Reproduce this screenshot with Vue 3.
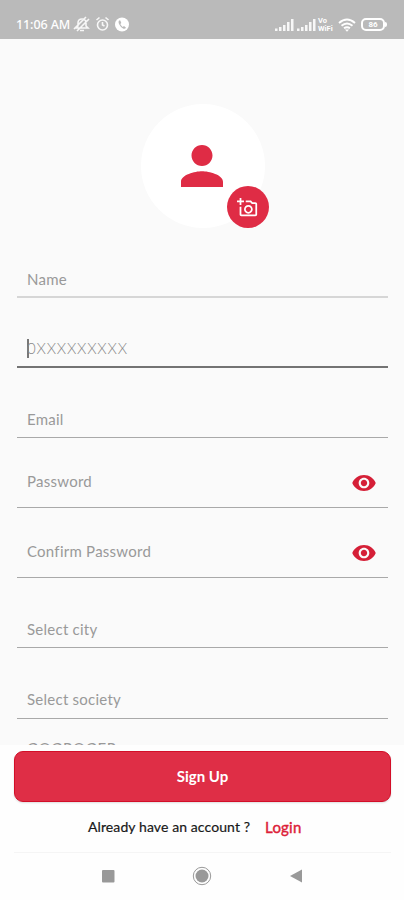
<template>
  <div class="screen">
    <header class="status-bar">
      <span class="time">11:06 AM</span>
      <svg class="status-left" viewBox="0 0 58 18" width="58" height="18">
        <g fill="none" stroke="#f7f7f7" stroke-width="1.6">
          <path d="M3 13l2-2V8q0-4 4-4t4 4v3l2 2zM7 15.500h4M1 14L13 2M4 16L16 4" />
          <circle cx="29.500" cy="10" r="5" />
          <path d="M29.500 7v3l2 1M23.500 5l3-2.500M35.500 5l-3-2.500" />
        </g>
        <circle cx="49" cy="9.500" r="7" fill="#fff" />
        <path d="M46 5.500q-1 1 0 3.500q1.500 3 4 4.500q2 .8 3-.8l-2-1.700-1.300.9q-1.700-1-2.400-2.800l1-1.200-1-2.400z" fill="#bababa" />
      </svg>
      <div class="status-right">
        <svg v-for="n in 2" :key="n" class="signal" viewBox="0 0 20 12" width="20" height="12">
          <path d="M1 9.500h2.500V12H1zM5 8h2.500v4H5zM9 6h2.500v6H9zM13 3h2.500v9H13zM17 0h2.500v12H17z" fill="#f7f7f7" />
        </svg>
        <div class="vowifi"><span>Vo</span><span>WiFi</span></div>
        <svg class="wifi" viewBox="0 0 18 14" width="18" height="14">
          <path d="M1 5q8-7 16 0M3.500 7.800q5.500-4.600 11 0M6 10.300q3-2.300 6 0" fill="none" stroke="#fff" stroke-width="1.900" />
          <path d="M7 11.500h4l-2 2.300z" fill="#fff" />
        </svg>
        <div class="battery">86</div>
        <span class="battery-tip"></span>
      </div>
    </header>

    <main class="form">
      <div class="avatar">
        <svg class="person" viewBox="4 4 16 16" width="42" height="42">
          <path d="M12 12c2.210 0 4-1.790 4-4s-1.790-4-4-4-4 1.790-4 4 1.790 4 4 4zm0 2c-2.670 0-8 1.340-8 4v2h16v-2c0-2.660-5.330-4-8-4z" />
        </svg>
        <div class="camera">
          <svg viewBox="0 0 24 24" width="21" height="21">
            <path d="M21 6h-3.170L16 4h-6v2h5.120l1.830 2H21v12H5v-9H3v9c0 1.100.9 2 2 2h16c1.100 0 2-.9 2-2V8c0-1.100-.9-2-2-2zM8 14c0 2.760 2.240 5 5 5s5-2.240 5-5-2.240-5-5-5-5 2.240-5 5zm5-3c1.650 0 3 1.350 3 3s-1.350 3-3 3-3-1.350-3-3 1.350-3 3-3zM5 6h3V4H5V1H3v3H0v2h3v3h2z" />
          </svg>
        </div>
      </div>

      <div v-for="field in fields" :key="field.id" class="field" :class="field.id">
        <span v-if="field.focused" class="caret"></span>
        <span class="label">{{ field.label }}</span>
        <svg v-if="field.secret" class="eye" viewBox="1 4.500 22 15" width="24" height="16">
          <path d="M12 4.500C7 4.500 2.730 7.610 1 12c1.730 4.390 6 7.500 11 7.500s9.270-3.110 11-7.500c-1.730-4.390-6-7.500-11-7.500zM12 17c-2.760 0-5-2.240-5-5s2.240-5 5-5 5 2.240 5 5-2.240 5-5 5zm0-8c-1.660 0-3 1.340-3 3s1.340 3 3 3 3-1.340 3-3-1.340-3-3-3z" />
        </svg>
      </div>
    </main>

    <footer class="actions">
      <button class="sign-up">Sign Up</button>
      <div class="account">
        <span class="question">Already have an account ?</span>
        <a class="login">Login</a>
      </div>
      <nav class="nav-bar">
        <svg viewBox="0 0 14 14" width="14" height="14"><rect x="1" y="1" width="12.500" height="12.500" rx="1" /></svg>
        <svg viewBox="0 0 20 20" width="20" height="20">
          <circle cx="10" cy="10" r="6.500" />
          <circle cx="10" cy="10" r="8.700" class="ring" />
        </svg>
        <svg viewBox="0 0 14 14" width="14" height="14"><path d="M1 7L13 .5v13z" /></svg>
      </nav>
    </footer>
  </div>
</template>

<script setup>
import { ref } from 'vue'

const fields = ref([
  { id: 'name', label: 'Name' },
  { id: 'phone', label: '0XXXXXXXXX', focused: true },
  { id: 'email', label: 'Email' },
  { id: 'password', label: 'Password', secret: true },
  { id: 'confirm', label: 'Confirm Password', secret: true },
  { id: 'city', label: 'Select city' },
  { id: 'society', label: 'Select society' },
  { id: 'code', label: 'GOGROGER' }
])
</script>

<style>
body {
  margin: 0;
  background: #fefefe;
}
</style>

<style scoped>
.screen {
  width: 404px;
  height: 900px;
  display: flex;
  flex-direction: column;
  overflow: hidden;
  background: #fafafa;
  font-family: Lato, "Open Sans", sans-serif;
}

.status-bar {
  height: 39px;
  flex: none;
  box-sizing: border-box;
  padding: 11px 17px 0 16px;
  display: flex;
  align-items: flex-start;
  background: #bababa;
  color: #fff;
}

.time {
  width: 57px;
  font: 500 12.500px/27px "Noto Sans", sans-serif;
  letter-spacing: -0.1px;
  white-space: nowrap;
}

.status-left {
  margin-top: 4px;
}

.status-right {
  margin-left: auto;
  height: 27px;
  display: flex;
  align-items: center;
}

.signal {
  margin-right: 2px;
}

.vowifi {
  width: 17px;
  margin-right: 3px;
  display: flex;
  flex-direction: column;
  font: bold 7.500px/8px Roboto, sans-serif;
}

.wifi {
  margin-right: 5px;
}

.battery {
  width: 24px;
  height: 13px;
  box-sizing: border-box;
  border: 2px solid #fff;
  border-radius: 5px;
  font: bold 8px/9px Roboto, sans-serif;
  text-align: center;
}

.battery-tip {
  width: 2px;
  height: 5px;
  border-radius: 0 2px 2px 0;
  background: #fff;
}

.form {
  height: 706px;
  flex: none;
  box-sizing: border-box;
  padding: 65px 16px 0 17px;
  overflow: hidden;
}

.avatar {
  width: 124px;
  height: 124px;
  margin: 0 auto;
  position: relative;
  display: flex;
  align-items: center;
  justify-content: center;
  border-radius: 50%;
  background: #fff;
}

.person {
  margin: 0 1px 1px 0;
  fill: #df2c45;
}

.camera {
  width: 42px;
  height: 42px;
  position: absolute;
  right: -4px;
  bottom: 0;
  display: flex;
  align-items: center;
  justify-content: center;
  border-radius: 50%;
  background: #df2c45;
}

.camera svg {
  fill: #fff;
}

.field {
  height: 70px;
  box-sizing: border-box;
  padding: 0 12px 8px 10px;
  display: flex;
  align-items: flex-end;
  justify-content: space-between;
  border-bottom: 1px solid #a9a9a9;
  color: #999;
  font-size: 15px;
  line-height: 20px;
  letter-spacing: 0.25px;
}

.name {
  padding-bottom: 7px;
  border-bottom: 2px solid #d6d6d6;
}

.phone {
  border-bottom: 2px solid #737373;
  justify-content: flex-start;
}

.phone .label {
  color: #888;
  font-weight: 300;
  letter-spacing: 0.8px;
}

.caret {
  width: 2px;
  height: 19px;
  margin-right: -2px;
  background: #777;
}

.password,
.confirm {
  padding-bottom: 16px;
}

.society {
  height: 71px;
  padding-bottom: 9px;
}

.code {
  height: 48px;
  letter-spacing: 0.7px;
}

.eye {
  fill: #d51f37;
}

.actions {
  flex: 1;
  display: flex;
  flex-direction: column;
  padding: 6px 13px 0 14px;
  background: #fefefe;
}

.sign-up {
  height: 51px;
  flex: none;
  padding: 0 0 2px;
  border: 1px solid #d30e28;
  border-radius: 9px;
  background: #df2e46;
  color: #fff;
  font: bold 15px/20px Lato, sans-serif;
  box-shadow: 0 1px 2px #ddd;
}

.account {
  height: 50px;
  flex: none;
  box-sizing: content-box;
  display: flex;
  align-items: center;
  padding-left: 74px;
  gap: 15px;
  border-bottom: 1px solid #f5f5f5;
  color: #181818;
  font-size: 14px;
  line-height: 20px;
}

.question {
  letter-spacing: 0.1px;
  -webkit-text-stroke: 0.2px #181818;
}

.login {
  color: #dc2038;
  font-size: 15px;
  -webkit-text-stroke: 0.4px #dc2038;
  letter-spacing: 0.2px;
}

.nav-bar {
  height: 46px;
  display: flex;
  align-items: center;
  padding: 0 88px 0 87px;
  justify-content: space-between;
}

.nav-bar svg {
  fill: #999;
}

.nav-bar .ring {
  fill: none;
  stroke: #999;
  stroke-width: 1;
}
</style>
